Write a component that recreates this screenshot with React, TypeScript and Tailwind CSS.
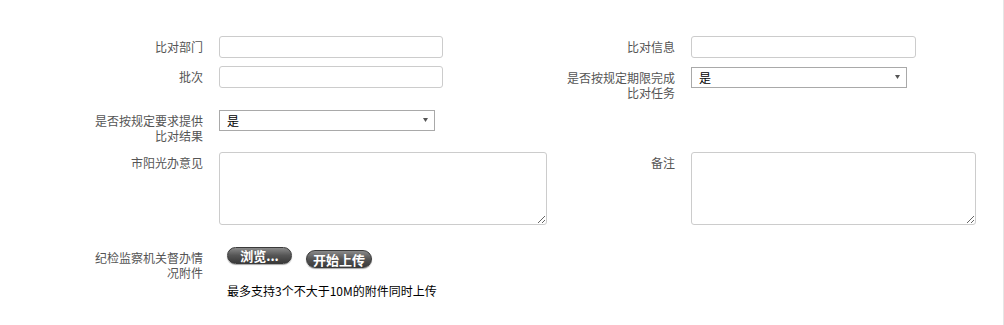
import React from 'react';

const font = { fontFamily: '"Noto Sans CJK SC", "Noto Sans", sans-serif' };

function Label({ children }: { children: React.ReactNode }) {
  return (
    <div className="w-[203px] shrink-0 pl-[91px] pt-[3px] text-right text-[12px] leading-[15px] text-[#555]">
      {children}
    </div>
  );
}

function TextInput({ w }: { w: string }) {
  return (
    <input
      type="text"
      className={`${w} h-[22px] shrink-0 rounded-[3px] border border-[#ccc] bg-white px-2 text-[12px] outline-none`}
    />
  );
}

function Select({ w }: { w: string }) {
  return (
    <div className={`relative ${w} h-[21px] shrink-0`}>
      <select className="block h-full w-full appearance-none border border-[#a9a9a9] bg-white pl-[7px] text-[12px] leading-[19px] text-black outline-none">
        <option>是</option>
        <option>否</option>
      </select>
      <svg className="pointer-events-none absolute right-[7px] top-[8px]" width="5" height="4" viewBox="0 0 5 4">
        <path d="M0 0h5L2.5 4z" fill="#555" />
      </svg>
    </div>
  );
}

function Area({ w }: { w: string }) {
  return (
    <textarea className={`${w} h-[73px] shrink-0 rounded-[3px] border border-[#ccc] bg-white p-1 text-[12px] outline-none`} />
  );
}

function PillButton({ children, className }: { children: React.ReactNode; className: string }) {
  return (
    <button
      className={`${className} flex items-center justify-center rounded-full border border-[#3a3a3a] bg-gradient-to-b from-[#8a8a8a] via-[#555] to-[#3a3a3a] text-[13px] font-bold leading-none text-white shadow-[0_1px_1px_rgba(0,0,0,0.35)]`}
    >
      {children}
    </button>
  );
}

export default function App() {
  return (
    <div className="h-[325px] w-[1004px] border-r border-[#e6e6e6] bg-white pt-[36px]" style={font}>
      <div className="flex">
        <div className="flex w-[472px] shrink-0 items-start gap-4">
          <Label>比对部门</Label>
          <TextInput w="w-[224px]" />
        </div>
        <div className="flex items-start gap-4">
          <Label>比对信息</Label>
          <TextInput w="w-[225px]" />
        </div>
      </div>

      <div className="mt-[8px] flex">
        <div className="flex w-[472px] shrink-0 items-start gap-4">
          <Label>批次</Label>
          <TextInput w="w-[224px]" />
        </div>
        <div className="flex items-start gap-4 pt-px">
          <Label>是否按规定期限完成比对任务</Label>
          <Select w="w-[216px]" />
        </div>
      </div>

      <div className="mt-[10px] flex">
        <div className="flex w-[472px] shrink-0 items-start gap-4">
          <Label>是否按规定要求提供比对结果</Label>
          <Select w="w-[216px]" />
        </div>
      </div>

      <div className="mt-[9px] flex">
        <div className="flex w-[472px] shrink-0 items-start gap-4">
          <Label>市阳光办意见</Label>
          <Area w="w-[328px]" />
        </div>
        <div className="flex items-start gap-4">
          <Label>备注</Label>
          <Area w="w-[285px]" />
        </div>
      </div>

      <div className="mt-[22px] flex items-start gap-4">
        <Label>纪检监察机关督办情况附件</Label>
        <div className="pl-2">
          <div className="flex items-start gap-[14px]">
            <PillButton className="h-[17px] w-[65px]">浏览...</PillButton>
            <PillButton className="mt-[3px] h-[18px] w-[66px]">开始上传</PillButton>
          </div>
          <p className="mt-[15px] text-[12px] leading-[15px] text-black">最多支持3个不大于10M的附件同时上传</p>
        </div>
      </div>
    </div>
  );
}
